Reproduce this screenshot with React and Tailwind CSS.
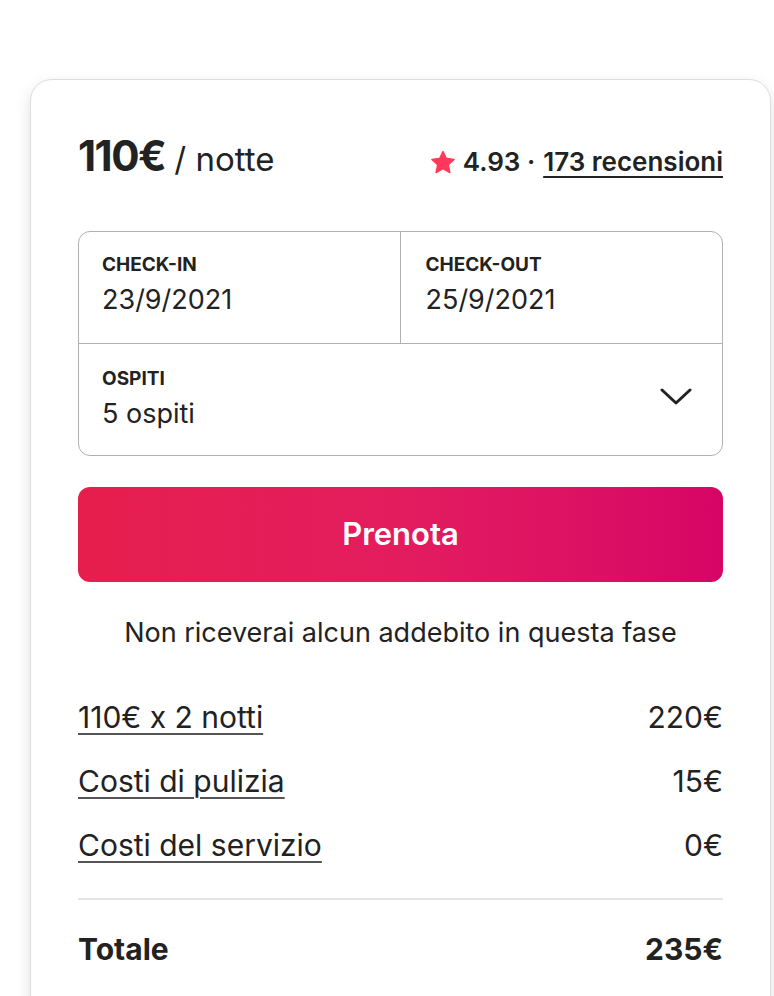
import React from 'react';

const rows = [
  { label: '110€ x 2 notti', value: '220€' },
  { label: 'Costi di pulizia', value: '15€' },
  { label: 'Costi del servizio', value: '0€' },
];

function Star() {
  return (
    <svg viewBox="0 0 32 32" className="w-[24px] h-[24px]" fill="#FF385C">
      <path d="M15.094 1.579l-4.124 8.885-9.86 1.27a1 1 0 0 0-.542 1.736l7.293 6.565-1.965 9.852a1 1 0 0 0 1.483 1.061L16 25.951l8.625 4.997a1 1 0 0 0 1.482-1.06l-1.965-9.853 7.293-6.565a1 1 0 0 0-.541-1.735l-9.86-1.271-4.127-8.885a1 1 0 0 0-1.814 0z" />
    </svg>
  );
}

function Chevron() {
  return (
    <svg viewBox="0 0 32 17" className="w-[32px] h-[17px] mb-[6px]" fill="none" stroke="#222" strokeWidth="3" strokeLinecap="round" strokeLinejoin="round">
      <path d="M2 2 L16 15 L30 2" />
    </svg>
  );
}

export default function App() {
  return (
    <div className="h-[996px] overflow-hidden bg-white pt-[79px] pl-[30px] text-[#222222] font-['Inter','Noto_Sans',sans-serif]">
      <div className="w-[741px] h-[960px] rounded-[22px] border border-[#dddddd] bg-white px-[47px] pt-[52px] shadow-[0_6px_16px_rgba(0,0,0,0.12)]">
        <div className="flex items-baseline justify-between leading-[48px]">
          <div className="flex items-baseline gap-[9px]">
            <span className="text-[42px] font-bold tracking-[-1.5px]">110€</span>
            <span className="text-[33px]">/ notte</span>
          </div>
          <div className="flex items-baseline gap-[8px] text-[26px] font-semibold">
            <span className="self-center"><Star /></span>
            <span>4.93 ·</span>
            <span className="underline underline-offset-[5px] decoration-[2px]">173 recensioni</span>
          </div>
        </div>

        <div className="mt-[45px] rounded-[12px] border border-[#b0b0b0]">
          <div className="grid grid-cols-2 border-b border-[#b0b0b0]">
            <div className="h-[111px] px-[23px] pt-[21px] border-r border-[#b0b0b0]">
              <div className="text-[19px] leading-[24px] font-bold">CHECK-IN</div>
              <div className="mt-[6px] text-[27px] leading-[34px]">23/9/2021</div>
            </div>
            <div className="h-[111px] px-[25px] pt-[21px]">
              <div className="text-[19px] leading-[24px] font-bold">CHECK-OUT</div>
              <div className="mt-[6px] text-[27px] leading-[34px]">25/9/2021</div>
            </div>
          </div>
          <div className="h-[111px] pl-[23px] pr-[30px] flex items-center justify-between">
            <div className="-mt-[2px]">
              <div className="text-[19px] leading-[24px] font-bold">OSPITI</div>
              <div className="mt-[6px] text-[27px] leading-[34px]">5 ospiti</div>
            </div>
            <Chevron />
          </div>
        </div>

        <button className="mt-[31px] w-full h-[95px] rounded-[12px] bg-linear-to-r from-[#E61E4D] via-[#E31C5F] to-[#D70466] text-white text-[31px] font-semibold">
          Prenota
        </button>

        <p className="mt-[34px] text-center text-[27px] leading-[33px]">Non riceverai alcun addebito in questa fase</p>

        <div className="mt-[49px] flex flex-col gap-[26px]">
          {rows.map((r) => (
            <div key={r.label} className="flex justify-between text-[30px] leading-[38px]">
              <span className="underline underline-offset-[5px] decoration-[2px] decoration-[#555]">{r.label}</span>
              <span>{r.value}</span>
            </div>
          ))}
        </div>

        <div className="mt-[34px] border-t-2 border-[#e4e4e4]" />

        <div className="mt-[30px] flex justify-between text-[30px] leading-[38px] font-bold">
          <span>Totale</span>
          <span>235€</span>
        </div>
      </div>
    </div>
  );
}
